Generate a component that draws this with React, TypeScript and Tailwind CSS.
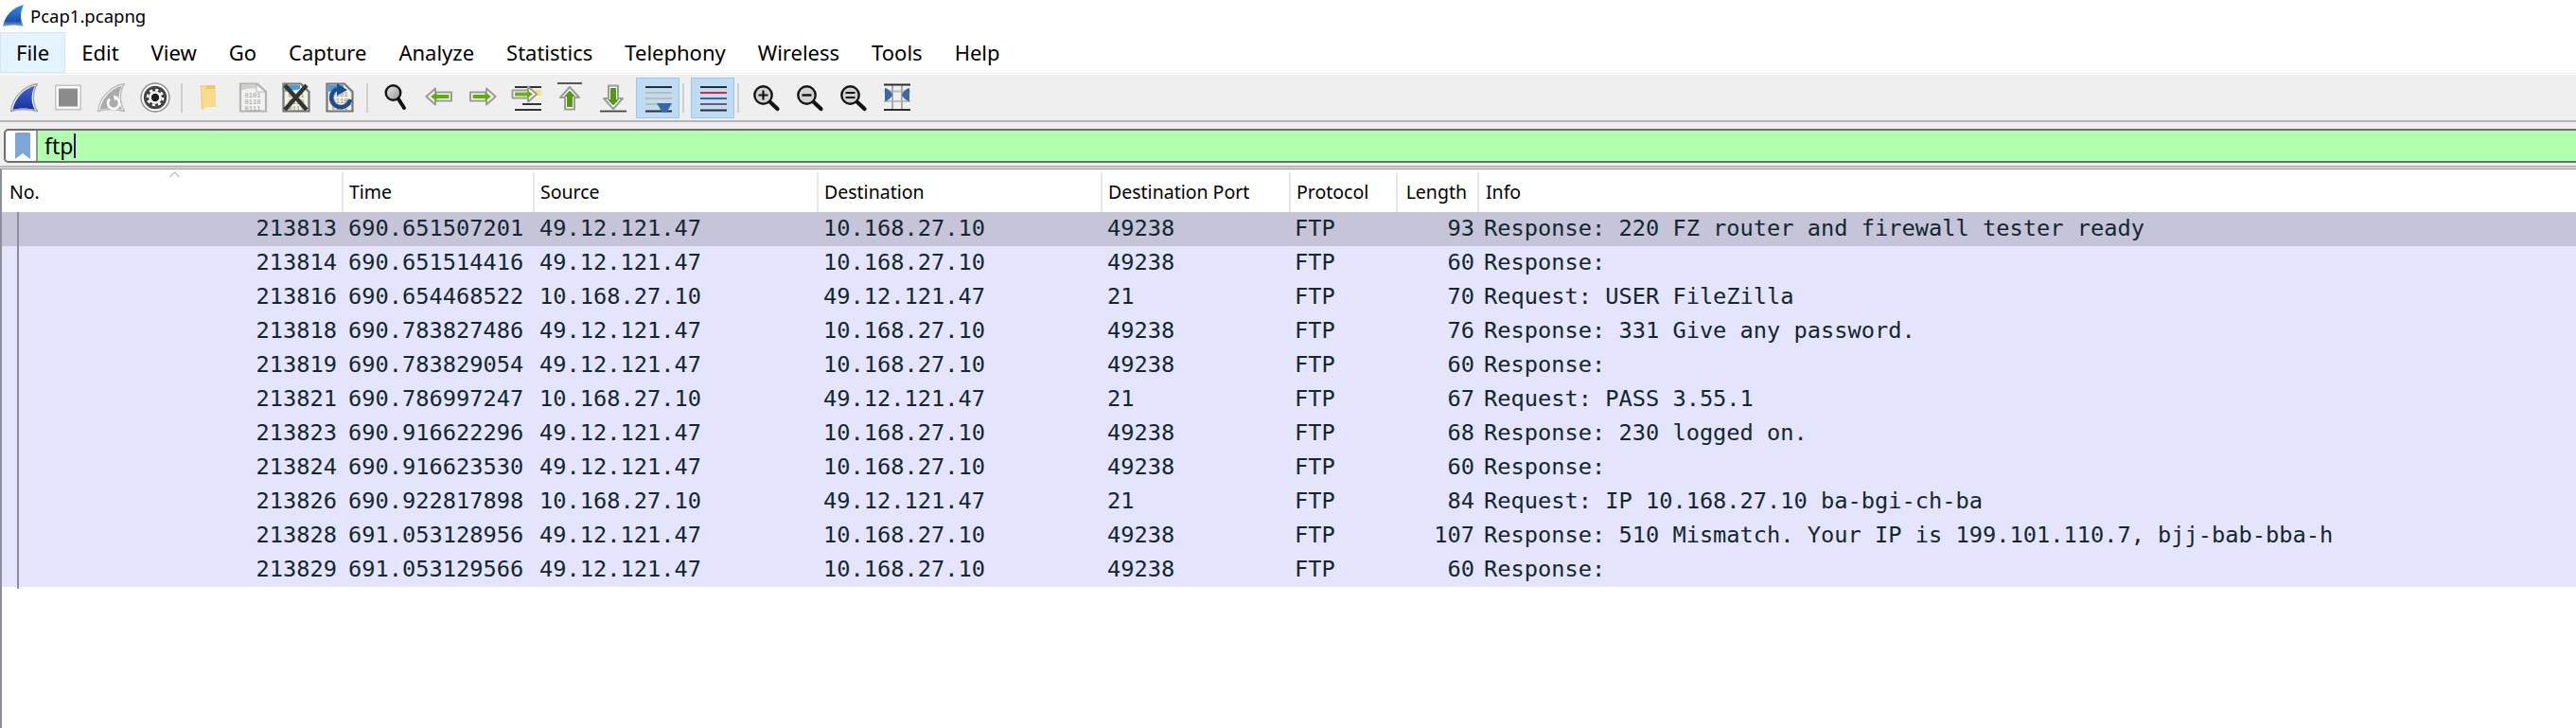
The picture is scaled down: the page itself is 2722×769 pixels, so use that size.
import type { ReactNode } from "react";

type Packet = {
  no: string;
  time: string;
  source: string;
  destination: string;
  port: string;
  length: string;
  info: string;
};

const client = "10.168.27.10";
const server = "49.12.121.47";

const packets: Packet[] = [
  { no: "213813", time: "690.651507201", source: server, destination: client, port: "49238", length: "93", info: "Response: 220 FZ router and firewall tester ready" },
  { no: "213814", time: "690.651514416", source: server, destination: client, port: "49238", length: "60", info: "Response:" },
  { no: "213816", time: "690.654468522", source: client, destination: server, port: "21", length: "70", info: "Request: USER FileZilla" },
  { no: "213818", time: "690.783827486", source: server, destination: client, port: "49238", length: "76", info: "Response: 331 Give any password." },
  { no: "213819", time: "690.783829054", source: server, destination: client, port: "49238", length: "60", info: "Response:" },
  { no: "213821", time: "690.786997247", source: client, destination: server, port: "21", length: "67", info: "Request: PASS 3.55.1" },
  { no: "213823", time: "690.916622296", source: server, destination: client, port: "49238", length: "68", info: "Response: 230 logged on." },
  { no: "213824", time: "690.916623530", source: server, destination: client, port: "49238", length: "60", info: "Response:" },
  { no: "213826", time: "690.922817898", source: client, destination: server, port: "21", length: "84", info: "Request: IP 10.168.27.10 ba-bgi-ch-ba" },
  { no: "213828", time: "691.053128956", source: server, destination: client, port: "49238", length: "107", info: "Response: 510 Mismatch. Your IP is 199.101.110.7, bjj-bab-bba-h" },
  { no: "213829", time: "691.053129566", source: server, destination: client, port: "49238", length: "60", info: "Response:" },
];

const menus = ["File", "Edit", "View", "Go", "Capture", "Analyze", "Statistics", "Telephony", "Wireless", "Tools", "Help"];

const columns = "grid grid-cols-[361px_202px_300px_300px_199px_113px_86px_1fr]";

function Icon({ children }: { children: ReactNode }) {
  return (
    <svg width="32" height="32" viewBox="0 0 32 32" fill="none">
      {children}
    </svg>
  );
}

const finPath = "M1.5 30.5C3 17 14 4 29.5 1.5C24 10 24 21 29.5 30.5C20 28 9 28 1.5 30.5Z";
const finInner = "M3.5 29C5.5 17.5 15 6.5 27 3.5C22.5 12 22.5 21 27 29C19 27 10 27 3.5 29Z";

function FinBlue() {
  return (
    <Icon>
      <defs>
        <linearGradient id="fin-blue" x1="0" y1="0" x2="0" y2="1">
          <stop offset="0" stopColor="#3f66d6" />
          <stop offset="1" stopColor="#1a2f9f" />
        </linearGradient>
      </defs>
      <path d={finPath} fill="#fff" stroke="#a3a3a3" strokeWidth="1.4" strokeLinejoin="round" />
      <path d={finInner} fill="url(#fin-blue)" />
    </Icon>
  );
}

function StopIcon() {
  return (
    <Icon>
      <rect x="2.8" y="3.3" width="26.4" height="25.4" fill="#fff" stroke="#c4c4c4" strokeWidth="1.6" />
      <rect x="6" y="6.5" width="20" height="19" fill="#8b8b8b" />
    </Icon>
  );
}

function FinRestart() {
  return (
    <Icon>
      <path d={finPath} fill="#fff" stroke="#b9b9b9" strokeWidth="1.4" strokeLinejoin="round" />
      <path d={finInner} fill="#ababab" />
      <path d="M14 17.5A6 6 0 1 0 21.5 17" stroke="#fff" strokeWidth="2.6" />
      <path d="M18 13.5L23 15.5L19 19.5Z" fill="#fff" />
    </Icon>
  );
}

function GearIcon() {
  return (
    <Icon>
      <circle cx="16" cy="16" r="15" fill="#fff" stroke="#8d8d8d" strokeWidth="1.4" />
      <circle cx="16" cy="16" r="12.2" fill="#434343" />
      <circle cx="16" cy="16" r="6.8" fill="#fff" />
      <circle cx="16" cy="16" r="8" stroke="#fff" strokeWidth="2.6" strokeDasharray="3.1 3.18" />
      <circle cx="16" cy="16" r="4.2" fill="#1d1d1d" />
    </Icon>
  );
}

function FolderIcon() {
  return (
    <Icon>
      <path d="M7 3H22.5V25H12L7 27Z" fill="#f2c765" />
      <path d="M7 3.5H13V7L22.5 7V23L24.5 26H14L9.5 29L7 27Z" fill="#f8db8c" />
      <path d="M7 3.5L9.5 29" stroke="#f2d27c" strokeWidth="1" />
    </Icon>
  );
}

function BinaryLines({ color, from }: { color: string; from: number }) {
  const rows = ["0101", "0110", "0111"];
  return (
    <>
      {rows.map((r, i) => (
        <text key={r} x="16" y={from + i * 7} textAnchor="middle" fontFamily="'Liberation Mono', monospace" fontSize="7" fill={color}>
          {r}
        </text>
      ))}
    </>
  );
}

function FileOpenIcon() {
  return (
    <Icon>
      <path d="M3 1.5H21L30 10V30.5H3Z" fill="#f2f2f0" stroke="#b3b3b3" strokeWidth="2.2" />
      <path d="M4 2.5H20L20 6C14 7 9 6 4 9Z" fill="#cfcfcf" />
      <path d="M20 2L20 10H29Z" fill="#fff" stroke="#b3b3b3" strokeWidth="1" />
      <BinaryLines color="#9a9a9a" from={16} />
    </Icon>
  );
}

function FileCloseIcon() {
  return (
    <Icon>
      <path d="M2.5 1.5H21L29.5 10V30.5H2.5Z" fill="#f3f1dc" stroke="#757575" strokeWidth="2.2" />
      <path d="M4 3H20V7C15 9 9 8 4 10Z" fill="#3f9fe0" />
      <BinaryLines color="#8a8a7a" from={16} />
      <path d="M4 3L27 29M27 3L4 29" stroke="#333" strokeWidth="4.4" />
    </Icon>
  );
}

function FileReloadIcon() {
  return (
    <Icon>
      <path d="M2.5 1.5H21L29.5 10V30.5H2.5Z" fill="#f3f1dc" stroke="#757575" strokeWidth="2.2" />
      <path d="M4 3H20V7C15 9 9 8 4 10Z" fill="#3f9fe0" />
      <BinaryLines color="#8a8a7a" from={15} />
      <path d="M27 18A10 10 0 1 1 13 7" stroke="#1e4c8e" strokeWidth="4.6" />
      <path d="M13 1L24 8L13 14Z" fill="#1e4c8e" />
    </Icon>
  );
}

function SearchIcon() {
  return (
    <Icon>
      <defs>
        <linearGradient id="lens" x1="0" y1="0" x2="1" y2="1">
          <stop offset="0" stopColor="#efefef" />
          <stop offset="1" stopColor="#8f8f8f" />
        </linearGradient>
      </defs>
      <circle cx="13.5" cy="11" r="7.8" fill="url(#lens)" stroke="#141414" strokeWidth="2.4" />
      <path d="M19 17.5L25 27" stroke="#111" strokeWidth="4" strokeLinecap="round" />
    </Icon>
  );
}

function ArrowLeftIcon() {
  return (
    <Icon>
      <path d="M2.5 15L12 6.5V10.5H29V19.5H12V23.5Z" fill="#fff" stroke="#9b9b9b" strokeWidth="2" strokeLinejoin="round" />
      <path d="M7 15L13.5 10V13H26.5V17H13.5V20Z" fill="#5eb000" />
    </Icon>
  );
}

function ArrowRightIcon() {
  return (
    <Icon>
      <path d="M29.5 15L20 6.5V10.5H3V19.5H20V23.5Z" fill="#fff" stroke="#9b9b9b" strokeWidth="2" strokeLinejoin="round" />
      <path d="M25 15L18.5 10V13H5.5V17H18.5V20Z" fill="#5eb000" />
    </Icon>
  );
}

function GoToIcon() {
  return (
    <Icon>
      <path d="M4 5H32M12 23H32M4 29H32" stroke="#333" strokeWidth="1.8" />
      <rect x="25" y="8" width="7" height="6" fill="#fbe26b" />
      <path d="M27 12.5L18 4.5V8.5H1.5V16.5H18V20.5Z" fill="#fff" stroke="#9b9b9b" strokeWidth="2" strokeLinejoin="round" />
      <path d="M23 12.5L17 8V10.5H4V14.5H17V17Z" fill="#68b40a" />
    </Icon>
  );
}

function FirstIcon() {
  return (
    <Icon>
      <path d="M3 1H29" stroke="#444" strokeWidth="1.8" />
      <path d="M16 5L26 16H21V28.5H11V16H6Z" fill="#fff" stroke="#9b9b9b" strokeWidth="2" strokeLinejoin="round" />
      <path d="M16 8.5L22 15H19V26H13V15H10Z" fill="#4f9d06" />
    </Icon>
  );
}

function LastIcon() {
  return (
    <Icon>
      <path d="M2 30.5H30" stroke="#444" strokeWidth="1.8" />
      <path d="M16 28L26 17H21V3.5H11V17H6Z" fill="#fff" stroke="#9b9b9b" strokeWidth="2" strokeLinejoin="round" />
      <path d="M16 24.5L22 18H19V6H13V18H10Z" fill="#4f9d06" />
    </Icon>
  );
}

function AutoScrollIcon() {
  return (
    <Icon>
      <path d="M3 5H31M3 30.5H31" stroke="#2d2d2d" strokeWidth="2" />
      <path d="M3 11H31M3 17H31M3 23H31" stroke="#bcbdb4" strokeWidth="2" />
      <path d="M15 22H31L26 30.5C25 32 21 32 20 30.5Z" fill="#3a69a9" />
    </Icon>
  );
}

function ColorizeIcon() {
  return (
    <Icon>
      <path d="M3 5H31M3 29.5H31" stroke="#2a2a2a" strokeWidth="2" />
      <path d="M3 11H31" stroke="#e5252c" strokeWidth="2" />
      <path d="M3 17H31" stroke="#3566a8" strokeWidth="2" />
      <path d="M3 23H31" stroke="#75507b" strokeWidth="2" />
    </Icon>
  );
}

function ZoomIcon({ glyph }: { glyph: ReactNode }) {
  return (
    <Icon>
      <circle cx="12.5" cy="13.5" r="9.2" fill="#d2d2d2" stroke="#141414" strokeWidth="2.4" />
      <path d="M20 21L27.5 28" stroke="#111" strokeWidth="4.2" strokeLinecap="round" />
      {glyph}
    </Icon>
  );
}

function ResizeIcon() {
  return (
    <Icon>
      <path d="M2 9.5H30M2 20H30" stroke="#bcbdb4" strokeWidth="2.2" />
      <path d="M11 3V29M21 3V29" stroke="#a9aaa2" strokeWidth="2" />
      <path d="M2 2.5H30M2 29H30" stroke="#2d2d2d" strokeWidth="2" />
      <path d="M3 6C6 6 10 10 11 13C10 16 6 20 3 20Z" fill="#3a69a9" />
      <path d="M29 6C26 6 22 10 21 13C22 16 26 20 29 20Z" fill="#3a69a9" />
    </Icon>
  );
}

function ToolButton({ children, active = false, className = "" }: { children: ReactNode; active?: boolean; className?: string }) {
  return (
    <div
      className={`flex h-[43px] w-[46px] shrink-0 items-center justify-center border ${
        active ? "border-[#90c8f6] bg-[#bfdcf3]" : "border-transparent"
      } ${className}`}
    >
      {children}
    </div>
  );
}

function Separator({ className }: { className: string }) {
  return <div className={`h-[31px] w-[2px] shrink-0 bg-[#d0d0d0] ${className}`} />;
}

function Toolbar() {
  return (
    <div className="flex h-[48px] items-center bg-[#efefef] pl-[3px]">
      <ToolButton><FinBlue /></ToolButton>
      <ToolButton><StopIcon /></ToolButton>
      <ToolButton><FinRestart /></ToolButton>
      <ToolButton><GearIcon /></ToolButton>
      <Separator className="ml-[4px] mr-[5px]" />
      <ToolButton><FolderIcon /></ToolButton>
      <ToolButton><FileOpenIcon /></ToolButton>
      <ToolButton><FileCloseIcon /></ToolButton>
      <ToolButton><FileReloadIcon /></ToolButton>
      <Separator className="ml-[5px] mr-[6px]" />
      <ToolButton><SearchIcon /></ToolButton>
      <ToolButton><ArrowLeftIcon /></ToolButton>
      <ToolButton><ArrowRightIcon /></ToolButton>
      <ToolButton><GoToIcon /></ToolButton>
      <ToolButton><FirstIcon /></ToolButton>
      <ToolButton><LastIcon /></ToolButton>
      <ToolButton active className="ml-px"><AutoScrollIcon /></ToolButton>
      <Separator className="ml-[3px] mr-[7px]" />
      <ToolButton active><ColorizeIcon /></ToolButton>
      <Separator className="ml-[3px] mr-[6px]" />
      <ToolButton>
        <ZoomIcon glyph={<path d="M7.5 13.5H17.5M12.5 8.5V18.5" stroke="#111" strokeWidth="2.2" />} />
      </ToolButton>
      <ToolButton>
        <ZoomIcon glyph={<path d="M7.5 13.5H17.5" stroke="#111" strokeWidth="2.4" />} />
      </ToolButton>
      <ToolButton>
        <ZoomIcon glyph={<path d="M7.5 11H17.5M7.5 16H17.5" stroke="#111" strokeWidth="2.2" />} />
      </ToolButton>
      <ToolButton><ResizeIcon /></ToolButton>
    </div>
  );
}

function FilterBar() {
  return (
    <div className="bg-[#efefef] pb-[3px] pl-[4px] pt-[7px]">
      <div className="-mr-[10px] flex h-[36px] overflow-hidden rounded-[5px] border-2 border-[#6e6e6e] bg-[#afffaf]">
        <div className="flex w-[34px] shrink-0 items-center justify-center border-r-2 border-[#8f9a8f] bg-white pl-[4px]">
          <svg width="16" height="28" viewBox="0 0 16 28">
            <path d="M0 1.5Q0 0 1.5 0H14.5Q16 0 16 1.5V28L8 22L0 28Z" fill="#7ea7d8" />
          </svg>
        </div>
        <div className="flex items-center pl-[7px] font-['Noto_Sans',sans-serif] text-[23px] leading-none text-black">
          ftp
          <span className="ml-px h-[26px] w-[2px] bg-[#4a0d5c]" />
        </div>
      </div>
    </div>
  );
}

function Header() {
  const labels = ["Time", "Source", "Destination", "Destination Port", "Protocol"];
  return (
    <div className={`${columns} relative h-[45px] pt-[3px] font-['Noto_Sans',sans-serif] text-[19.5px] text-black`}>
      <svg className="absolute left-[177px] top-[2px]" width="11" height="7" viewBox="0 0 11 7" fill="none">
        <path d="M0.5 6L5.5 1L10.5 6" stroke="#8a8a8a" strokeWidth="1" />
      </svg>
      <div className="flex items-center border-r-2 border-[#e6e6e6] pl-[8px]">No.</div>
      {labels.map((label) => (
        <div key={label} className="flex items-center border-r-2 border-[#e6e6e6] pl-[6px]">
          {label}
        </div>
      ))}
      <div className="flex items-center justify-end border-r-2 border-[#e6e6e6] pr-[11px]">Length</div>
      <div className="flex items-center pl-[7px]">Info</div>
    </div>
  );
}

function PacketRow({ packet, selected }: { packet: Packet; selected: boolean }) {
  return (
    <div
      className={`${columns} h-[36px] items-center whitespace-pre font-['DejaVu_Sans_Mono',monospace] text-[23.67px] leading-none text-[#12272e] ${
        selected ? "bg-[#c6c4d9]" : "bg-[#e4e4fc]"
      }`}
    >
      <div className="pr-[7px] text-right">{packet.no}</div>
      <div className="pl-[5px]">{packet.time}</div>
      <div className="pl-[5px]">{packet.source}</div>
      <div className="pl-[5px]">{packet.destination}</div>
      <div className="pl-[5px]">{packet.port}</div>
      <div className="pl-[4px]">FTP</div>
      <div className="pr-[5px] text-right">{packet.length}</div>
      <div className="pl-[5px]">{packet.info}</div>
    </div>
  );
}

export default function App() {
  return (
    <div className="flex h-[769px] w-[2722px] flex-col overflow-hidden bg-white">
      <div className="flex h-[34px] items-center gap-[6px] pl-[3px] font-['Noto_Sans',sans-serif] text-[18.5px] text-black">
        <svg width="23" height="24" viewBox="0 0 23 24">
          <defs>
            <linearGradient id="title-fin" x1="0" y1="0" x2="0" y2="1">
              <stop offset="0" stopColor="#2f8fe6" />
              <stop offset="0.75" stopColor="#1a4fae" />
              <stop offset="1" stopColor="#7fb0dc" />
            </linearGradient>
          </defs>
          <path d="M0 23C2 13 9 3 22 0C18 8 18 16 22 23C14 21 7 21 0 23Z" fill="url(#title-fin)" />
        </svg>
        Pcap1.pcapng
      </div>

      <div className="flex h-[43px] items-stretch font-['Noto_Sans',sans-serif] text-[22px] text-black">
        {menus.map((name, i) => (
          <div
            key={name}
            className={`flex items-center border px-[16px] ${
              i === 0 ? "border-[#cce8ff] bg-[#e5f3ff]" : "border-transparent"
            }`}
          >
            {name}
          </div>
        ))}
      </div>
      <div className="h-px bg-[#f0f0f0]" />
      <div className="h-px bg-white" />

      <Toolbar />
      <div className="h-[2px] bg-[#b5b5b5]" />
      <FilterBar />
      <div className="h-[2px] bg-[#b5b5b5]" />
      <div className="h-px bg-[#efefef]" />
      <div className="h-px bg-[#8a9099]" />

      <div className="relative flex-1 border-l-2 border-[#8a9099]">
        <Header />
        <div className="relative">
          <div className="absolute left-[16px] top-0 h-[398px] w-[2px] bg-[#8b9099]" />
          {packets.map((packet, i) => (
            <PacketRow key={packet.no} packet={packet} selected={i === 0} />
          ))}
        </div>
      </div>
    </div>
  );
}
